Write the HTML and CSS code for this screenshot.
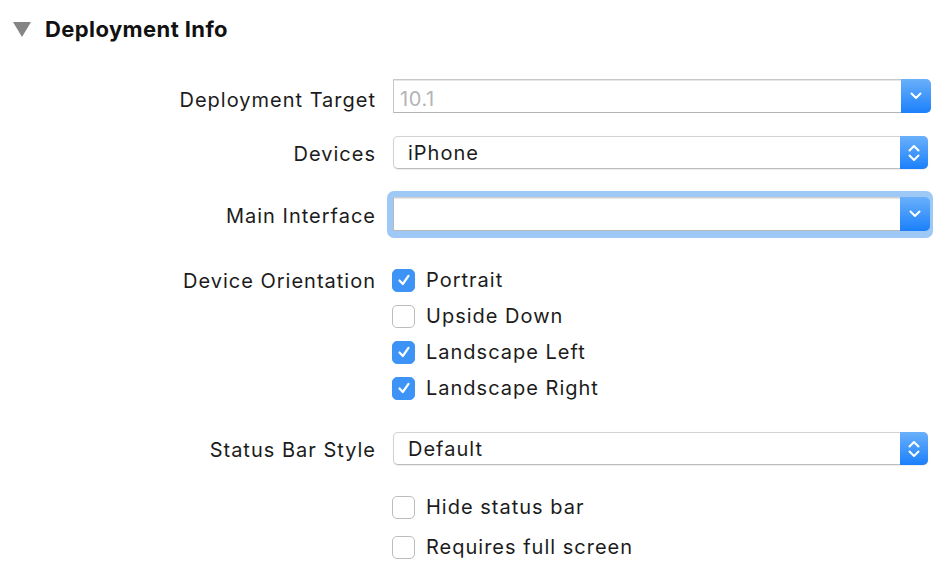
FILE: index.html
```html
<!DOCTYPE html>
<html>
<head>
<meta charset="utf-8">
<link rel="stylesheet" href="styles.css">
</head>
<body>
<div class="panel">
  <div class="header">
    <span class="disclosure"></span>
    <span class="title">Deployment Info</span>
  </div>
  <div class="form">
    <div class="row row-target">
      <div class="label">Deployment Target</div>
      <div class="combo">
        <div class="combo-field placeholder">10.1</div>
        <div class="btn combo-btn">
          <svg width="12" height="8" viewBox="0 0 12 8"><path d="M1.5 1.5 L6 6 L10.5 1.5" fill="none" stroke="#fff" stroke-width="2" stroke-linecap="round" stroke-linejoin="round"/></svg>
        </div>
      </div>
    </div>

    <div class="row row-devices">
      <div class="label">Devices</div>
      <div class="popup">
        <div class="popup-text">iPhone</div>
        <div class="btn popup-btn">
          <svg width="12" height="18" viewBox="0 0 12 18"><path d="M1.5 6.5 L6 2 L10.5 6.5 M1.5 11.5 L6 16 L10.5 11.5" fill="none" stroke="#fff" stroke-width="2" stroke-linecap="round" stroke-linejoin="round"/></svg>
        </div>
      </div>
    </div>

    <div class="row row-main">
      <div class="label">Main Interface</div>
      <div class="focus">
        <div class="combo">
          <div class="combo-field"></div>
          <div class="btn combo-btn">
            <svg width="12" height="8" viewBox="0 0 12 8"><path d="M1.5 1.5 L6 6 L10.5 1.5" fill="none" stroke="#fff" stroke-width="2" stroke-linecap="round" stroke-linejoin="round"/></svg>
          </div>
        </div>
      </div>
    </div>

    <div class="row row-orient">
      <div class="label label-top">Device Orientation</div>
      <div class="checks">
        <div class="check"><span class="box on"><svg width="16" height="16" viewBox="0 0 16 16"><path d="M3.5 8.5 L6.8 12 L12.5 3.8" fill="none" stroke="#fff" stroke-width="2.2" stroke-linecap="round" stroke-linejoin="round"/></svg></span><span class="ctext">Portrait</span></div>
        <div class="check"><span class="box"></span><span class="ctext">Upside Down</span></div>
        <div class="check"><span class="box on"><svg width="16" height="16" viewBox="0 0 16 16"><path d="M3.5 8.5 L6.8 12 L12.5 3.8" fill="none" stroke="#fff" stroke-width="2.2" stroke-linecap="round" stroke-linejoin="round"/></svg></span><span class="ctext">Landscape Left</span></div>
        <div class="check"><span class="box on"><svg width="16" height="16" viewBox="0 0 16 16"><path d="M3.5 8.5 L6.8 12 L12.5 3.8" fill="none" stroke="#fff" stroke-width="2.2" stroke-linecap="round" stroke-linejoin="round"/></svg></span><span class="ctext">Landscape Right</span></div>
      </div>
    </div>

    <div class="row row-status">
      <div class="label">Status Bar Style</div>
      <div class="popup">
        <div class="popup-text">Default</div>
        <div class="btn popup-btn">
          <svg width="12" height="18" viewBox="0 0 12 18"><path d="M1.5 6.5 L6 2 L10.5 6.5 M1.5 11.5 L6 16 L10.5 11.5" fill="none" stroke="#fff" stroke-width="2" stroke-linecap="round" stroke-linejoin="round"/></svg>
        </div>
      </div>
    </div>

    <div class="row row-hide">
      <div class="label"></div>
      <div class="checks">
        <div class="check tall"><span class="box"></span><span class="ctext">Hide status bar</span></div>
        <div class="check tall"><span class="box"></span><span class="ctext">Requires full screen</span></div>
      </div>
    </div>
  </div>
</div>
</body>
</html>
```

FILE: styles.css
```css
html, body {
  margin: 0;
  padding: 0;
  background: #ffffff;
}

body {
  font-family: Inter, "Open Sans", "Liberation Sans", sans-serif;
  color: #1c1c1c;
  width: 948px;
  height: 578px;
  overflow: hidden;
}

.header {
  display: flex;
  align-items: center;
  height: 58px;
  padding-left: 13px;
}

.disclosure {
  width: 0;
  height: 0;
  border-left: 9px solid transparent;
  border-right: 9px solid transparent;
  border-top: 15px solid #858585;
  margin-right: 14px;
  margin-top: 1px;
}

.title {
  font-weight: 700;
  font-size: 22px;
  color: #111;
  letter-spacing: 0.4px;
}

.form {
  display: flex;
  flex-direction: column;
  margin-top: 21px;
}

.row {
  display: flex;
  align-items: center;
  column-gap: 18px;
}

.label {
  width: 376px;
  flex: none;
  box-sizing: border-box;
  text-align: right;
  font-size: 20px;
  letter-spacing: 1px;
  margin-right: -1px;
  padding-top: 2px;
  color: #1c1c1c;
}

.row-target .label {
  padding-top: 7px;
}

.label-top {
  align-self: flex-start;
  line-height: 36px;
}

.label.label-top {
  padding-top: 1px;
}

.combo, .popup {
  display: flex;
  width: 538px;
  height: 34px;
  box-sizing: border-box;
}

.combo-field {
  flex: 1;
  border: 1px solid #c8c8c8;
  border-bottom-color: #b5b5b5;
  border-right: none;
  background: #fff;
  font-size: 20px;
  letter-spacing: 0.6px;
  padding-left: 6px;
  padding-top: 6px;
  line-height: 26px;
  box-shadow: inset 0 1px 0 #e6e6e6;
}

.placeholder {
  color: #b4b4b4;
}

.btn {
  display: flex;
  align-items: center;
  justify-content: center;
  background: linear-gradient(#6ab0fb, #1b80fb);
}

.combo-btn {
  width: 30px;
  border-radius: 0 5px 5px 0;
}

.popup {
  width: 535px;
  height: 33px;
  border: 1px solid #d2d2d2;
  border-bottom-color: #bdbdbd;
  border-radius: 5px;
  background: #fff;
  box-shadow: 0 0.5px 1px rgba(0,0,0,0.08);
}

.popup-text {
  flex: 1;
  font-size: 20px;
  letter-spacing: 1px;
  padding-top: 2px;
  line-height: 29px;
  padding-left: 14px;
  color: #1c1c1c;
}

.popup-btn {
  width: 28px;
  margin: -1px -1px -1px 0;
  border-radius: 0 5px 5px 0;
}

.row-devices {
  margin-top: 23px;
}

.row-main {
  margin-top: 22px;
}

.focus {
  margin-left: -6px;
  width: 546px;
  padding: 6px 3px 7px 6px;
  box-sizing: border-box;
  background: #9ec9f7;
  border-radius: 7px;
}

.focus .combo {
  width: 537px;
}

.focus .combo-field {
  border-color: #b8b8b8;
  border-top-color: #d0d0d0;
}

.checks {
  display: flex;
  flex-direction: column;
  margin-left: -1px;
}

.row-orient {
  margin-top: 24px;
}

.check {
  display: flex;
  align-items: center;
  height: 36px;
}

.check.tall {
  height: 40px;
}

.box {
  width: 23px;
  height: 23px;
  box-sizing: border-box;
  border-radius: 5px;
  border: 1px solid #bcbcbc;
  background: #fff;
  display: flex;
  align-items: center;
  justify-content: center;
  margin-right: 11px;
  flex: none;
}

.box.on {
  background: #3d94f6;
  border-color: #3d94f6;
}

.ctext {
  font-size: 20px;
  letter-spacing: 1px;
  color: #1c1c1c;
}

.row-status {
  margin-top: 26px;
}

.row-hide {
  margin-top: 22px;
}
```
